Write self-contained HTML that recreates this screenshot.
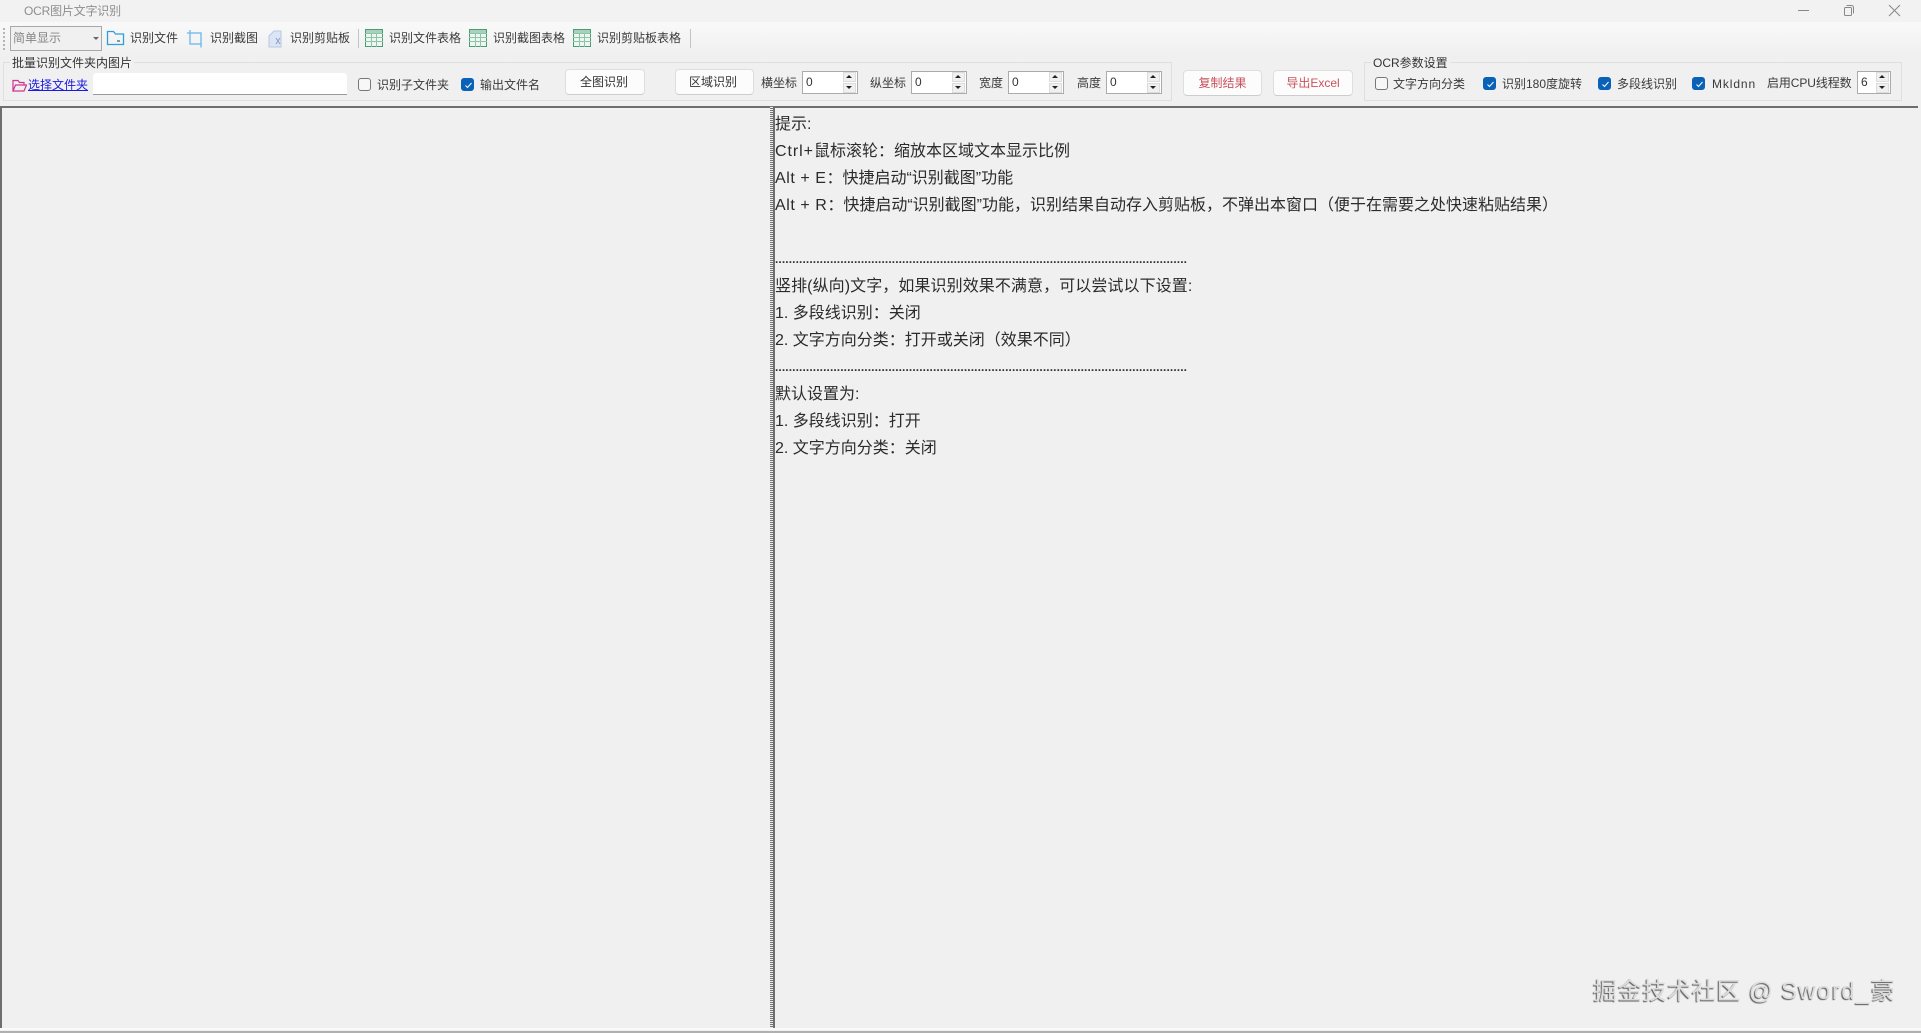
<!DOCTYPE html>
<html lang="zh-CN">
<head>
<meta charset="utf-8">
<title>OCR图片文字识别</title>
<style>
html,body{margin:0;padding:0;width:1921px;height:1033px;overflow:hidden;background:#f0f0f0;}
body{position:relative;font-family:"Liberation Sans","Noto Sans CJK SC",sans-serif;color:#333;}
.t{position:absolute;white-space:nowrap;font-size:12px;line-height:16px;color:#3a3a3a;}
.a{position:absolute;box-sizing:border-box;}
.gb{position:absolute;box-sizing:border-box;border:1px solid #dfdfdf;}
.btn{position:absolute;box-sizing:border-box;background:#fcfcfc;border:1px solid #dedede;border-bottom-color:#cdcdcd;border-radius:4px;text-align:center;font-size:12px;line-height:24px;color:#333;white-space:nowrap;}
.cb{position:absolute;box-sizing:border-box;width:13px;height:13px;border:1px solid #777;border-radius:3px;background:#f7f7f7;}
.cb.on{background:#0a62b8;border-color:#0a62b8;}
.cb.on svg{position:absolute;left:1px;top:1px;}
.sp{position:absolute;box-sizing:border-box;height:23px;top:71px;background:#fff;border:1px solid #ababab;font-size:12px;line-height:21px;padding-left:3px;color:#333;}
.sp i{position:absolute;right:1px;width:13px;height:10px;background:#f0f0f0;border:1px solid #dcdcdc;box-sizing:border-box;}
.sp i.up{top:0}.sp i.dn{bottom:0}
.sp i:after{content:"";position:absolute;left:2px;border-left:3px solid transparent;border-right:3px solid transparent;}
.sp i.up:after{top:2px;border-bottom:3px solid #222;}
.sp i.dn:after{top:2px;border-top:3px solid #222;}
.l{position:absolute;left:775px;white-space:nowrap;font-size:16px;line-height:27px;height:27px;color:#2b2b2b;}
.l b{font-weight:normal;letter-spacing:.95px;}
.l b.k{letter-spacing:.55px;}
.dots{position:absolute;left:775px;white-space:nowrap;font-size:12px;font-weight:bold;letter-spacing:.1px;line-height:16px;color:#333;}
svg{position:absolute;display:block;}
</style>
</head>
<body>
<div class="a" style="left:0;top:0;width:1921px;height:22px;background:#f2f2f2"></div>
<div class="a" style="left:0;top:22px;width:1921px;height:36px;background:linear-gradient(#f9f9f9,#efefef)"></div>

<div class="t" style="left:24px;top:3px;color:#8e8e8e;letter-spacing:-.2px">OCR图片文字识别</div>
<svg style="left:1798px;top:10px" width="12" height="2"><rect width="11" height="1" fill="#888"/></svg>
<svg style="left:1843px;top:4px" width="12" height="13" fill="none" stroke="#888"><rect x="1.5" y="3.5" width="7" height="8" rx="1"/><path d="M3.5 1.5h5a2 2 0 0 1 2 2v6"/></svg>
<svg style="left:1888px;top:4px" width="13" height="13" stroke="#888" fill="none"><path d="M1 1l11 11M12 1L1 12"/></svg>

<!-- toolbar -->
<svg style="left:3px;top:27px" width="3" height="24" fill="#b4b4b4"><rect y="1" width="2" height="2"/><rect y="5" width="2" height="2"/><rect y="9" width="2" height="2"/><rect y="13" width="2" height="2"/><rect y="17" width="2" height="2"/><rect y="21" width="2" height="2"/></svg>
<div class="a" style="left:10px;top:26px;width:92px;height:25px;border:1px solid #a8a8a8;background:#f0f0f0"></div>
<div class="t" style="left:13px;top:30px;color:#868686">简单显示</div>
<svg style="left:93px;top:37px" width="6" height="4"><path d="M0 0h6L3 3z" fill="#666"/></svg>

<svg style="left:106px;top:30px" width="19" height="16" fill="none" stroke="#2e9fd8" stroke-width="1.3"><path d="M1.500 14.500V1.500h6l2 2.500h8v10.500z"/><path d="M11 11h3" stroke="#3a6a8a"/></svg>
<div class="t" style="left:130px;top:30px">识别文件</div>
<svg style="left:186px;top:29px" width="19" height="19" fill="none" stroke="#7cc0ea" stroke-width="1.500"><path d="M1 4h14v12M4 1v14h12"/><path d="M15 16v2.500"/></svg>
<div class="t" style="left:210px;top:30px">识别截图</div>
<svg style="left:268px;top:30px" width="16" height="18"><path d="M1 6l5-5h7v16H1z" fill="#dbe5f5" stroke="#b8c8e2"/><path d="M8 8l4 6M12 8l-4 6" stroke="#8aa0c8" fill="none"/></svg>
<div class="t" style="left:290px;top:30px">识别剪贴板</div>
<div class="a" style="left:358px;top:29px;width:1px;height:19px;background:#c4c4c4"></div>

<svg style="left:365px;top:29px" width="18" height="18"><rect x=".5" y=".5" width="17" height="17" fill="#eef6f0" stroke="#4a9c78"/><path d="M0 4.500h18M0 8.500h18M0 12.500h18M6.500 4v14M11.500 4v14" stroke="#8cc4aa" fill="none"/><rect x="1" y="1" width="16" height="3" fill="#a8d0bb"/></svg>
<div class="t" style="left:389px;top:30px">识别文件表格</div>
<svg style="left:469px;top:29px" width="18" height="18"><rect x=".5" y=".5" width="17" height="17" fill="#eef6f0" stroke="#4a9c78"/><path d="M0 4.500h18M0 8.500h18M0 12.500h18M6.500 4v14M11.500 4v14" stroke="#8cc4aa" fill="none"/><rect x="1" y="1" width="16" height="3" fill="#a8d0bb"/></svg>
<div class="t" style="left:493px;top:30px">识别截图表格</div>
<svg style="left:573px;top:29px" width="18" height="18"><rect x=".5" y=".5" width="17" height="17" fill="#eef6f0" stroke="#4a9c78"/><path d="M0 4.500h18M0 8.500h18M0 12.500h18M6.500 4v14M11.500 4v14" stroke="#8cc4aa" fill="none"/><rect x="1" y="1" width="16" height="3" fill="#a8d0bb"/></svg>
<div class="t" style="left:597px;top:30px">识别剪贴板表格</div>
<div class="a" style="left:690px;top:29px;width:1px;height:19px;background:#c4c4c4"></div>

<!-- group 1 -->
<div class="gb" style="left:3px;top:62px;width:1169px;height:39px"></div>
<div class="t" style="left:10px;top:55px;padding:0 2px;background:#f0f0f0;color:#333">批量识别文件夹内图片</div>
<svg style="left:12px;top:79px" width="15" height="13" fill="none" stroke="#d0348c" stroke-width="1.200"><path d="M1 12V1.500h5l1.500 2H12V6"/><path d="M1 12l2.500-6h11L12 12z"/></svg>
<div class="t" style="left:28px;top:77px;color:#1a1ae0;text-decoration:underline">选择文件夹</div>
<div class="a" style="left:93px;top:73px;width:254px;height:22px;background:#fff;border-bottom:1px solid #9a9a9a;border-radius:3px 3px 0 0"></div>
<div class="cb" style="left:358px;top:78px"></div>
<div class="t" style="left:377px;top:77px">识别子文件夹</div>
<div class="cb on" style="left:461px;top:78px"><svg width="11" height="11" fill="none" stroke="#fff" stroke-width="1"><path d="M2.500 5.500l2 2 4-4.500"/></svg></div>
<div class="t" style="left:480px;top:77px">输出文件名</div>
<div class="btn" style="left:565px;top:69px;width:80px;height:26px;padding-right:2px">全图识别</div>
<div class="btn" style="left:675px;top:69px;width:79px;height:26px;padding-right:3px">区域识别</div>
<div class="t" style="left:761px;top:75px">横坐标</div>
<div class="sp" style="left:802px;width:56px">0<i class="up"></i><i class="dn"></i></div>
<div class="t" style="left:870px;top:75px">纵坐标</div>
<div class="sp" style="left:911px;width:56px">0<i class="up"></i><i class="dn"></i></div>
<div class="t" style="left:979px;top:75px">宽度</div>
<div class="sp" style="left:1008px;width:56px">0<i class="up"></i><i class="dn"></i></div>
<div class="t" style="left:1077px;top:75px">高度</div>
<div class="sp" style="left:1106px;width:56px">0<i class="up"></i><i class="dn"></i></div>

<div class="btn" style="left:1183px;top:70px;width:79px;height:26px;color:#c9525c">复制结果</div>
<div class="btn" style="left:1273px;top:70px;width:80px;height:26px;color:#c9525c">导出Excel</div>

<!-- group 2 -->
<div class="gb" style="left:1364px;top:62px;width:538px;height:39px"></div>
<div class="t" style="left:1371px;top:55px;padding:0 2px;background:#f0f0f0;color:#333">OCR参数设置</div>
<div class="cb" style="left:1375px;top:77px"></div>
<div class="t" style="left:1393px;top:76px">文字方向分类</div>
<div class="cb on" style="left:1483px;top:77px"><svg width="11" height="11" fill="none" stroke="#fff" stroke-width="1"><path d="M2.500 5.500l2 2 4-4.500"/></svg></div>
<div class="t" style="left:1502px;top:76px">识别180度旋转</div>
<div class="cb on" style="left:1598px;top:77px"><svg width="11" height="11" fill="none" stroke="#fff" stroke-width="1"><path d="M2.500 5.500l2 2 4-4.500"/></svg></div>
<div class="t" style="left:1617px;top:76px">多段线识别</div>
<div class="cb on" style="left:1692px;top:77px"><svg width="11" height="11" fill="none" stroke="#fff" stroke-width="1"><path d="M2.500 5.500l2 2 4-4.500"/></svg></div>
<div class="t" style="left:1712px;top:76px;letter-spacing:.9px">Mkldnn</div>
<div class="t" style="left:1767px;top:75px;letter-spacing:-.1px">启用CPU线程数</div>
<div class="sp" style="left:1857px;width:34px">6<i class="up"></i><i class="dn"></i></div>

<!-- panels -->
<div class="a" style="left:0;top:106px;width:770px;height:922px;border-top:2px solid #6e6e6e;border-left:2px solid #6e6e6e;background:#f0f0f0"></div>
<div class="a" style="left:770px;top:106px;width:3px;height:922px;background:repeating-linear-gradient(#777 0 1px,#ececec 1px 2px)"></div>
<div class="a" style="left:773px;top:106px;width:1145px;height:922px;border-top:2px solid #6e6e6e;border-left:2px solid #6e6e6e;background:#f0f0f0"></div>
<div class="a" style="left:0;top:1028px;width:1921px;height:2px;background:#fafafa"></div>
<div class="a" style="left:0;top:1031px;width:1921px;height:2px;background:#b0b0b0"></div>

<div class="l" style="top:111px">提示:</div>
<div class="l" style="top:138px"><b>Ctrl+</b>鼠标滚轮：缩放本区域文本显示比例</div>
<div class="l" style="top:165px"><b class="k">Alt + E</b>：快捷启动“识别截图”功能</div>
<div class="l" style="top:192px"><b class="k">Alt + R</b>：快捷启动“识别截图”功能，识别结果自动存入剪贴板，不弹出本窗口（便于在需要之处快速粘贴结果）</div>
<div class="dots" style="top:251px">........................................................................................................................</div>
<div class="l" style="top:273px;letter-spacing:.08px">竖排(纵向)文字，如果识别效果不满意，可以尝试以下设置:</div>
<div class="l" style="top:300px">1. 多段线识别：关闭</div>
<div class="l" style="top:327px">2. 文字方向分类：打开或关闭（效果不同）</div>
<div class="dots" style="top:359px">........................................................................................................................</div>
<div class="l" style="top:381px">默认设置为:</div>
<div class="l" style="top:408px">1. 多段线识别：打开</div>
<div class="l" style="top:435px">2. 文字方向分类：关闭</div>

<div class="t" style="left:1593px;top:976px;font-size:24px;line-height:32px;color:#dcdcdc;text-shadow:-1px 1px 1px #555;letter-spacing:.7px">掘金技术社区 @ <span style="letter-spacing:1.4px">Sword_</span>豪</div>
</body>
</html>
